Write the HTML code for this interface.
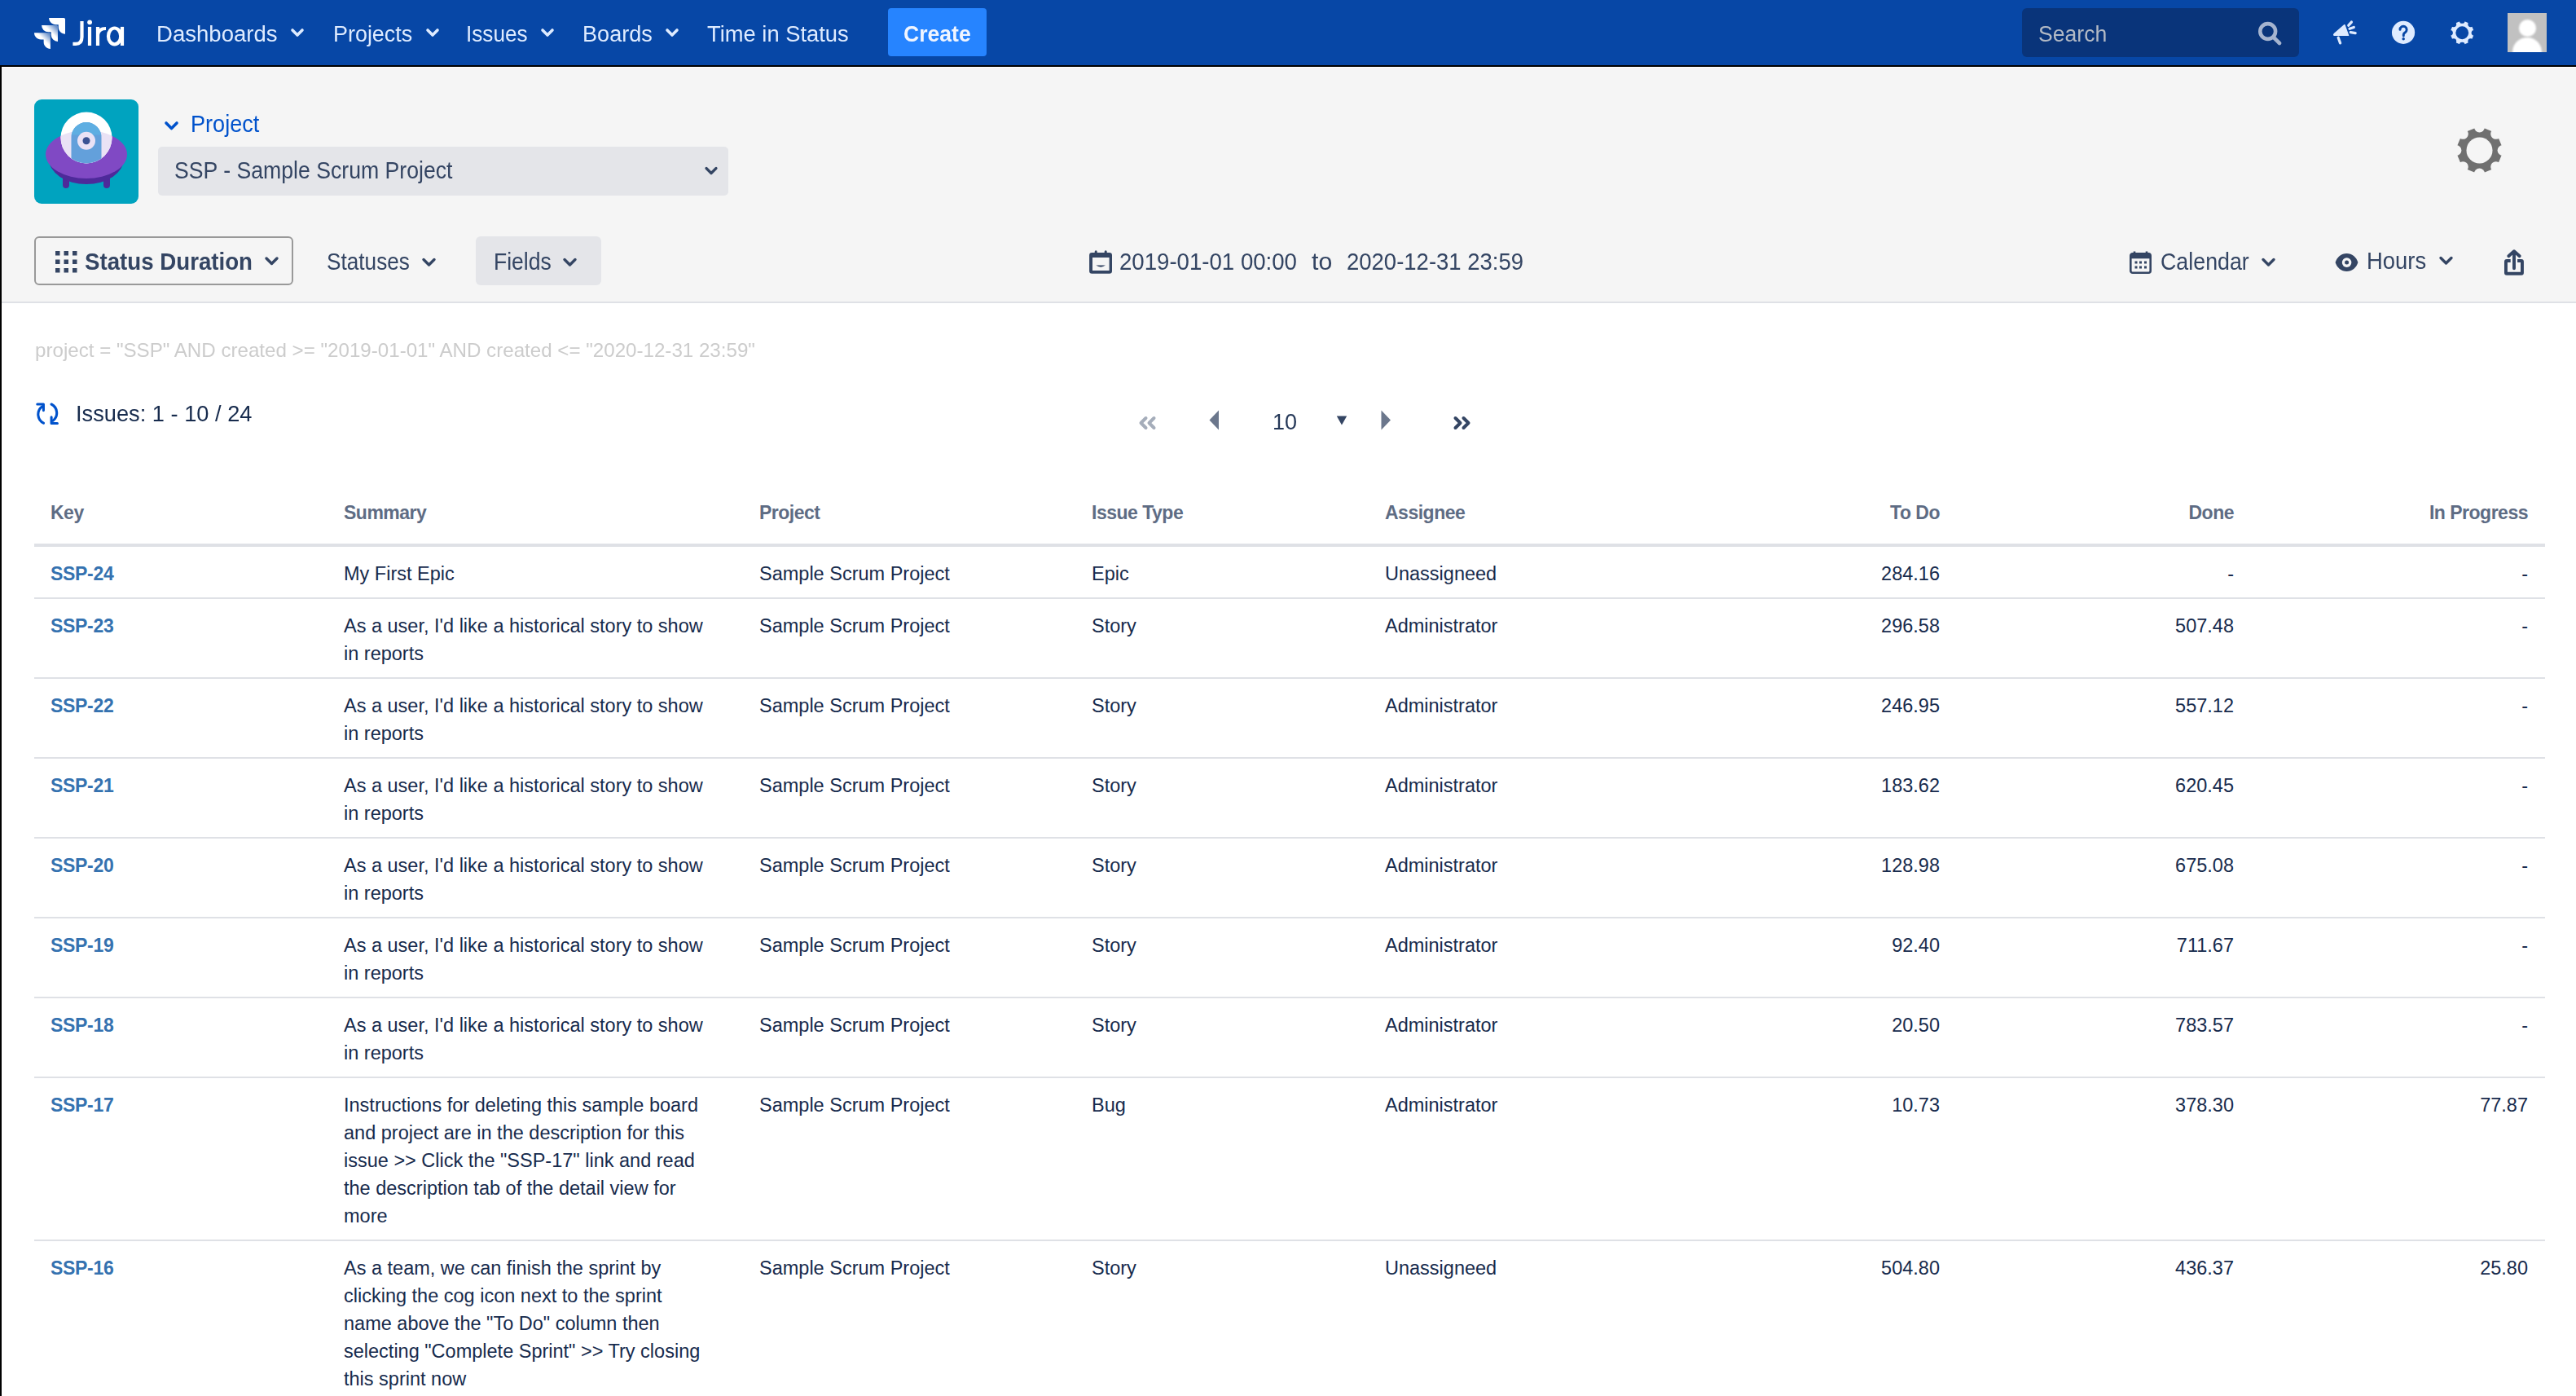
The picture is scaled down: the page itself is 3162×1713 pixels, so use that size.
<!DOCTYPE html>
<html><head><meta charset="utf-8">
<style>
html,body{margin:0;padding:0}
body{width:3162px;height:1713px;position:relative;overflow:hidden;background:#fff;font-family:"Liberation Sans",sans-serif;color:#172B4D}
.a{position:absolute;white-space:nowrap;line-height:1}
svg{position:absolute;overflow:visible}
#nav{position:absolute;left:0;top:0;width:3162px;height:80px;background:#0747A6}
.nv{color:#DEEBFF;font-size:27px}
#frameTop{position:absolute;left:0;top:80px;width:3162px;height:2px;background:#000}
#frameLeft{position:absolute;left:0;top:80px;width:2px;height:1633px;background:#000}
#hdr{position:absolute;left:2px;top:82px;width:3160px;height:288px;background:#F5F5F5;border-top:1px solid #fff}
#hdrB{position:absolute;left:2px;top:370px;width:3160px;height:2px;background:#DFE1E6}
.tb{color:#344563;font-size:26.7px}
.th{color:#5E6C84;font-size:23px;font-weight:700;letter-spacing:-0.5px}
.td{color:#172B4D;font-size:23.5px;line-height:34px}
.key{color:#3572B0;font-size:23px;font-weight:700;letter-spacing:-0.3px}
.r{text-align:right}
.hl{position:absolute;left:42px;width:3082px;background:#DFE1E6}
</style></head><body>
<div id="nav">
<svg style="left:42px;top:22px" width="38" height="38" viewBox="2 2 20 20">
<defs>
<linearGradient id="g1" x1="98%" y1="2%" x2="58%" y2="42%"><stop offset="0.18" stop-color="#fff" stop-opacity="0.4"/><stop offset="1" stop-color="#fff"/></linearGradient>
<linearGradient id="g2" x1="98%" y1="2%" x2="58%" y2="42%"><stop offset="0.18" stop-color="#fff" stop-opacity="0.4"/><stop offset="1" stop-color="#fff"/></linearGradient>
</defs>
<path fill="#fff" d="M11.53 2c0 2.4 1.97 4.35 4.35 4.35h1.78v1.7c0 2.4 1.94 4.34 4.34 4.35V2.84a.84.84 0 0 0-.84-.84h-9.63z"/>
<path fill="url(#g1)" d="M6.77 6.8a4.36 4.36 0 0 0 4.34 4.34h1.8v1.72a4.36 4.36 0 0 0 4.34 4.34V7.63a.84.84 0 0 0-.83-.83H6.77z"/>
<path fill="url(#g2)" d="M2 11.6c0 2.4 1.95 4.34 4.35 4.34h1.78v1.72c.01 2.39 1.95 4.34 4.34 4.34v-9.57a.84.84 0 0 0-.84-.84H2z"/>
</svg>
<svg style="left:0;top:0" width="160" height="70" viewBox="0 0 160 70"><g fill="none" stroke="#fff" stroke-width="4.2"><path d="M100.5 25.9V45.5Q100.5 53.9 93 53.9H89.4"/><path d="M110 32.9V56"/><path d="M120 32.9V56M120 42.5Q121 35 130 35"/><ellipse cx="140.6" cy="44.4" rx="7.6" ry="9.9"/><path d="M150 32.9V56"/></g><circle cx="110.1" cy="27.3" r="2.9" fill="#fff"/></svg>
<svg style="left:357px;top:35px" width="16" height="10" viewBox="0 0 16 10"><path d="M2 2l6 6 6-6" fill="none" stroke="#DEEBFF" stroke-width="3.6" stroke-linecap="round" stroke-linejoin="round"/></svg>
<svg style="left:523px;top:35px" width="16" height="10" viewBox="0 0 16 10"><path d="M2 2l6 6 6-6" fill="none" stroke="#DEEBFF" stroke-width="3.6" stroke-linecap="round" stroke-linejoin="round"/></svg>
<svg style="left:664px;top:35px" width="16" height="10" viewBox="0 0 16 10"><path d="M2 2l6 6 6-6" fill="none" stroke="#DEEBFF" stroke-width="3.6" stroke-linecap="round" stroke-linejoin="round"/></svg>
<svg style="left:817px;top:35px" width="16" height="10" viewBox="0 0 16 10"><path d="M2 2l6 6 6-6" fill="none" stroke="#DEEBFF" stroke-width="3.6" stroke-linecap="round" stroke-linejoin="round"/></svg>
<div style="position:absolute;left:1090px;top:10px;width:121px;height:59px;background:#2684FF;border-radius:4px"></div>
<div style="position:absolute;left:2482px;top:10px;width:340px;height:60px;background:#09347A;border-radius:6px"></div>
<svg style="left:2772px;top:27px" width="30" height="30" viewBox="0 0 30 30"><circle cx="11.7" cy="11.5" r="9.4" fill="none" stroke="#A5B4CF" stroke-width="4.6"/><path d="M19.5 19.5l6.5 6.5" stroke="#A5B4CF" stroke-width="4.6" stroke-linecap="round"/></svg>
<svg style="left:2858px;top:22px" width="40" height="36" viewBox="0 0 40 36"><path d="M19.9 8.6L7.2 19.6Q6 21 7.6 21.4L24.6 21.4z" fill="#DEEBFF" stroke="#DEEBFF" stroke-width="1.4" stroke-linejoin="round"/><path d="M12.2 24.3l2.4 6.6M24.8 9.2l3.6-4.1M26.1 13.3l5.2-1.8M27.3 17.6l5.8 1" stroke="#DEEBFF" stroke-width="3.3" stroke-linecap="round"/></svg>
<svg style="left:2936px;top:26px" width="29" height="29" viewBox="0 0 29 29"><circle cx="14.05" cy="13.85" r="14.1" fill="#DEEBFF"/><path d="M10 10.4A4.1 4.1 0 1 1 16.2 13.9Q14.3 14.9 14.3 16.5V18" fill="none" stroke="#0747A6" stroke-width="2.9" stroke-linecap="round"/><circle cx="14.2" cy="21.7" r="1.75" fill="#0747A6"/></svg>
<svg style="left:3008px;top:26px" width="28.5" height="28.5" viewBox="0 0 28.5 28.5"><defs><mask id="gm2"><rect x="-3" y="-3" width="34.5" height="34.5" fill="#fff"/><circle cx="14.25" cy="-0.52" r="3.3563636363636364" fill="#000"/><circle cx="24.69" cy="3.81" r="3.3563636363636364" fill="#000"/><circle cx="29.02" cy="14.25" r="3.3563636363636364" fill="#000"/><circle cx="24.69" cy="24.69" r="3.3563636363636364" fill="#000"/><circle cx="14.25" cy="29.02" r="3.3563636363636364" fill="#000"/><circle cx="3.81" cy="24.69" r="3.3563636363636364" fill="#000"/><circle cx="-0.52" cy="14.25" r="3.3563636363636364" fill="#000"/><circle cx="3.81" cy="3.81" r="3.3563636363636364" fill="#000"/><circle cx="14.25" cy="14.25" r="7.9" fill="#000"/></mask></defs><polygon points="14.25,-1.03 25.06,3.44 29.53,14.25 25.06,25.06 14.25,29.53 3.44,25.06 -1.03,14.25 3.44,3.44" fill="#DEEBFF" mask="url(#gm2)"/></svg>
<div style="position:absolute;left:3078px;top:16px;width:48px;height:48px;background:#C1C1C1;overflow:hidden">
<div style="position:absolute;left:13.5px;top:8px;width:21px;height:20.5px;border-radius:50%;background:#fff;filter:blur(0.9px)"></div>
<div style="position:absolute;left:6.2px;top:29.5px;width:35.7px;height:36px;border-radius:50% 50% 0 0;background:#fff;filter:blur(0.9px)"></div>
</div>
</div>
<div id="frameTop"></div>
<div id="hdr"></div>
<div id="hdrB"></div>
<svg style="left:42px;top:122px" width="128" height="128" viewBox="0 0 128 128">
<defs><clipPath id="dome"><circle cx="64" cy="47" r="31.5"/></clipPath></defs>
<rect width="128" height="128" rx="9" fill="#00A3BF"/>
<path d="M35 95v10a4 4 0 0 0 8 0V95zM85 95v10a4 4 0 0 0 8 0V95z" fill="#4D2A9A"/>
<ellipse cx="64" cy="73" rx="46" ry="31" fill="#4D2A9A"/>
<ellipse cx="64" cy="67.5" rx="50" ry="29.5" fill="#8049C4"/>
<circle cx="64" cy="47" r="31.5" fill="#fff"/>
<ellipse cx="64" cy="67.5" rx="50" ry="29.5" fill="#EAE2F5" clip-path="url(#dome)"/>
<path d="M45.5 84V46.5a18.5 18.5 0 0 1 37 0V84z" fill="#63A0DB" clip-path="url(#dome)"/>
<path d="M45.5 46.5a18.5 18.5 0 0 1 37 0v-3H45.5z" fill="#5EAEE2"/>
<circle cx="64" cy="50.7" r="11" fill="#EAE2F5"/>
<circle cx="64" cy="50.7" r="4.5" fill="#3B5394"/>
</svg>
<svg style="left:202px;top:149px" width="17" height="11" viewBox="0 0 17 11"><path d="M2 2l6.5 6.5L15 2" fill="none" stroke="#0052CC" stroke-width="3.6" stroke-linecap="round" stroke-linejoin="round"/></svg>
<div style="position:absolute;left:194px;top:180px;width:700px;height:60px;background:#E4E5E9;border-radius:5px"></div>
<svg style="left:865px;top:204px" width="16" height="11" viewBox="0 0 16 11"><path d="M2 2.5l6 6 6-6" fill="none" stroke="#344563" stroke-width="3.2" stroke-linecap="round" stroke-linejoin="round"/></svg>
<svg style="left:3016px;top:157px" width="55" height="55" viewBox="0 0 55 55"><defs><mask id="gm1"><rect x="-3" y="-3" width="61" height="61" fill="#fff"/><circle cx="27.50" cy="-1.10" r="6.5" fill="#000"/><circle cx="47.72" cy="7.28" r="6.5" fill="#000"/><circle cx="56.10" cy="27.50" r="6.5" fill="#000"/><circle cx="47.72" cy="47.72" r="6.5" fill="#000"/><circle cx="27.50" cy="56.10" r="6.5" fill="#000"/><circle cx="7.28" cy="47.72" r="6.5" fill="#000"/><circle cx="-1.10" cy="27.50" r="6.5" fill="#000"/><circle cx="7.28" cy="7.28" r="6.5" fill="#000"/><circle cx="27.5" cy="27.5" r="16" fill="#000"/></mask></defs><polygon points="27.50,-2.10 48.43,6.57 57.10,27.50 48.43,48.43 27.50,57.10 6.57,48.43 -2.10,27.50 6.57,6.57" fill="#707070" mask="url(#gm1)"/></svg>
<div style="position:absolute;left:42px;top:290px;width:314px;height:56px;border:2px solid #999;border-radius:6px"></div>
<svg style="left:68px;top:308px" width="27" height="27" viewBox="0 0 27 27" fill="#344563"><rect x="0" y="0" width="5.5" height="5.5"/><rect x="10.5" y="0" width="5.5" height="5.5"/><rect x="21" y="0" width="5.5" height="5.5"/><rect x="0" y="10.5" width="5.5" height="5.5"/><rect x="10.5" y="10.5" width="5.5" height="5.5"/><rect x="21" y="10.5" width="5.5" height="5.5"/><rect x="0" y="21" width="5.5" height="5.5"/><rect x="10.5" y="21" width="5.5" height="5.5"/><rect x="21" y="21" width="5.5" height="5.5"/></svg>
<svg style="left:325px;top:315px" width="17" height="11" viewBox="0 0 17 11"><path d="M2 2l6.5 6.5L15 2" fill="none" stroke="#344563" stroke-width="3.4" stroke-linecap="round" stroke-linejoin="round"/></svg>
<svg style="left:518px;top:316px" width="17" height="12" viewBox="0 0 17 12"><path d="M2 2.5l6.5 6.5L15 2.5" fill="none" stroke="#344563" stroke-width="3.4" stroke-linecap="round" stroke-linejoin="round"/></svg>
<div style="position:absolute;left:584px;top:290px;width:154px;height:59.5px;background:#E4E5E9;border-radius:6px"></div>
<svg style="left:691px;top:316px" width="17" height="12" viewBox="0 0 17 12"><path d="M2 2.5l6.5 6.5L15 2.5" fill="none" stroke="#344563" stroke-width="3.4" stroke-linecap="round" stroke-linejoin="round"/></svg>
<svg style="left:1330px;top:300px" width="42" height="42" viewBox="0 0 42 42"><path fill="#344563" fill-rule="evenodd" d="M10.3 10H31.8A3.2 3.2 0 0 1 35 13.2V32.6A3.2 3.2 0 0 1 31.8 35.8H10.3A3.2 3.2 0 0 1 7.1 32.6V13.2A3.2 3.2 0 0 1 10.3 10zM11 16V31.9H31.6V16z"/><path d="M15.2 8.8v2M27.2 8.8v2" stroke="#344563" stroke-width="3" stroke-linecap="round"/><path d="M15.3 25.6H27Q21.2 29.8 15.3 25.6z" fill="#344563"/></svg>
<svg style="left:2614px;top:308px" width="28" height="28" viewBox="0 0 28 28"><path d="M6 0.5v4M21 0.5v4" stroke="#344563" stroke-width="2.6"/><rect x="1.3" y="3.3" width="24.4" height="23.4" rx="2.5" fill="none" stroke="#344563" stroke-width="2.6"/><rect x="1.3" y="3.3" width="24.4" height="6" fill="#344563"/><g fill="#344563"><rect x="6.5" y="12.5" width="3" height="3"/><rect x="12" y="12.5" width="3" height="3"/><rect x="18" y="12.5" width="3" height="3"/><rect x="6.5" y="18.5" width="3" height="3"/><rect x="12" y="18.5" width="3" height="3"/><rect x="18" y="18.5" width="3" height="3"/></g></svg>
<svg style="left:2776px;top:316px" width="17" height="12" viewBox="0 0 17 12"><path d="M2 2.5l6.5 6.5L15 2.5" fill="none" stroke="#344563" stroke-width="3.4" stroke-linecap="round" stroke-linejoin="round"/></svg>
<svg style="left:2860px;top:302px" width="40" height="40" viewBox="0 0 40 40"><path d="M6.6 20C8.5 13.5 14 8.9 20.5 8.9S32.5 13.5 34.4 20C32.5 26.5 27 31 20.5 31S8.5 26.5 6.6 20z" fill="#344563"/><circle cx="20.6" cy="20.1" r="5.8" fill="#F5F5F5"/><circle cx="20.6" cy="20.1" r="2.5" fill="#344563"/></svg>
<svg style="left:2994px;top:314px" width="17" height="12" viewBox="0 0 17 12"><path d="M2 2.5l6.5 6.5L15 2.5" fill="none" stroke="#344563" stroke-width="3.4" stroke-linecap="round" stroke-linejoin="round"/></svg>
<svg style="left:3065px;top:300px" width="40" height="42" viewBox="0 0 40 42"><path fill="#344563" d="M12 18H16.7V21.9H12.9V33.8H29V21.9H25.1V18H29.9A3 3 0 0 1 32.9 21V34.7A3 3 0 0 1 29.9 37.7H12A3 3 0 0 1 9 34.7V21A3 3 0 0 1 12 18z"/><path d="M21 9V29.3M14.3 14.2L21 8.2l6.7 6" fill="none" stroke="#344563" stroke-width="3.9" stroke-linecap="round" stroke-linejoin="round"/></svg>
<svg style="left:36px;top:485px" width="45" height="45" viewBox="0 0 45 45"><path d="M17.4 34.2A12 12 0 0 1 15.5 14" fill="none" stroke="#0052CC" stroke-width="3.1" stroke-linecap="round"/><path d="M9.8 11H17.4V18.6" fill="none" stroke="#0052CC" stroke-width="3.1" stroke-linecap="round" stroke-linejoin="round"/><path d="M27.1 11A12 12 0 0 1 29 31.2" fill="none" stroke="#0052CC" stroke-width="3.1" stroke-linecap="round"/><path d="M27.1 26.9V34.5H34.4" fill="none" stroke="#0052CC" stroke-width="3.1" stroke-linecap="round" stroke-linejoin="round"/></svg>
<svg style="left:1396px;top:509px" width="26" height="20" viewBox="0 0 26 20"><path d="M10.5 4L4.5 10l6 6M20.5 4L14.5 10l6 6" fill="none" stroke="#A5ADBA" stroke-width="4" stroke-linecap="round" stroke-linejoin="round"/></svg>
<svg style="left:1484px;top:503px" width="13" height="25" viewBox="0 0 13 25"><path d="M12 0.5V24.5L0.5 12.5z" fill="#6B778C"/></svg>
<svg style="left:1640px;top:510px" width="14" height="12" viewBox="0 0 14 12"><path d="M0.8 0.5H13.2L7 11.5z" fill="#344563"/></svg>
<svg style="left:1695px;top:503px" width="13" height="25" viewBox="0 0 13 25"><path d="M0.5 0.5V24.5L12 12.5z" fill="#6B778C"/></svg>
<svg style="left:1782px;top:509px" width="26" height="20" viewBox="0 0 26 20"><path d="M4.5 4L10.5 10l-6 6M14.5 4L20.5 10l-6 6" fill="none" stroke="#344563" stroke-width="4" stroke-linecap="round" stroke-linejoin="round"/></svg>

<div class="a" style="left:192.1px;top:26.8px;font-size:28.4px;font-weight:400;color:#DEEBFF;transform:scaleX(0.9707);transform-origin:0 0">Dashboards</div>
<div class="a" style="left:408.8px;top:26.8px;font-size:28.4px;font-weight:400;color:#DEEBFF;transform:scaleX(0.9480);transform-origin:0 0">Projects</div>
<div class="a" style="left:572.2px;top:26.8px;font-size:28.4px;font-weight:400;color:#DEEBFF;transform:scaleX(0.9205);transform-origin:0 0">Issues</div>
<div class="a" style="left:714.7px;top:26.8px;font-size:28.4px;font-weight:400;color:#DEEBFF;transform:scaleX(0.9540);transform-origin:0 0">Boards</div>
<div class="a" style="left:867.5px;top:26.8px;font-size:28.4px;font-weight:400;color:#DEEBFF;transform:scaleX(0.9626);transform-origin:0 0">Time in Status</div>
<div class="a" style="left:1108.7px;top:26.9px;font-size:28.4px;font-weight:700;color:#F0F5FF;transform:scaleX(0.9356);transform-origin:0 0">Create</div>
<div class="a" style="left:2501.6px;top:27.1px;font-size:28.4px;font-weight:400;color:#B3BAC5;transform:scaleX(0.9368);transform-origin:0 0">Search</div>
<div class="a" style="left:234.2px;top:138.4px;font-size:28.8px;font-weight:400;color:#0052CC;transform:scaleX(0.9409);transform-origin:0 0">Project</div>
<div class="a" style="left:213.7px;top:195.0px;font-size:28.8px;font-weight:400;color:#344563;transform:scaleX(0.9250);transform-origin:0 0">SSP - Sample Scrum Project</div>
<div class="a" style="left:103.6px;top:306.6px;font-size:28.8px;font-weight:700;color:#344563;transform:scaleX(0.9608);transform-origin:0 0">Status Duration</div>
<div class="a" style="left:401.1px;top:306.6px;font-size:28.8px;font-weight:400;color:#344563;transform:scaleX(0.9091);transform-origin:0 0">Statuses</div>
<div class="a" style="left:606.0px;top:306.6px;font-size:28.8px;font-weight:400;color:#344563;transform:scaleX(0.9216);transform-origin:0 0">Fields</div>
<div class="a" style="left:1374.0px;top:306.6px;font-size:28.8px;font-weight:400;color:#344563;transform:scaleX(0.9587);transform-origin:0 0">2019-01-01 00:00</div>
<div class="a" style="left:1609.8px;top:306.6px;font-size:28.8px;font-weight:400;color:#344563;transform:scaleX(1.0522);transform-origin:0 0">to</div>
<div class="a" style="left:1652.6px;top:306.6px;font-size:28.8px;font-weight:400;color:#344563;transform:scaleX(0.9547);transform-origin:0 0">2020-12-31 23:59</div>
<div class="a" style="left:2651.6px;top:306.5px;font-size:28.8px;font-weight:400;color:#344563;transform:scaleX(0.9310);transform-origin:0 0">Calendar</div>
<div class="a" style="left:2904.6px;top:306.4px;font-size:28.8px;font-weight:400;color:#344563;transform:scaleX(0.9527);transform-origin:0 0">Hours</div>
<div class="a" style="left:42.7px;top:418.4px;font-size:24px;font-weight:400;color:#CCCCCC;transform:scaleX(1.0056);transform-origin:0 0">project = &quot;SSP&quot; AND created &gt;= &quot;2019-01-01&quot; AND created &lt;= &quot;2020-12-31 23:59&quot;</div>
<div class="a" style="left:93.1px;top:493.8px;font-size:28px;font-weight:400;color:#172B4D;transform:scaleX(0.9727);transform-origin:0 0">Issues: 1 - 10 / 24</div>
<div class="a" style="left:1562.1px;top:504.3px;font-size:28px;font-weight:400;color:#253858;transform:scaleX(0.9643);transform-origin:0 0">10</div>
<div class="a th" style="left:62px;top:617.9px">Key</div>
<div class="a th" style="left:422px;top:617.9px">Summary</div>
<div class="a th" style="left:932px;top:617.9px">Project</div>
<div class="a th" style="left:1340px;top:617.9px">Issue Type</div>
<div class="a th" style="left:1700px;top:617.9px">Assignee</div>
<div class="a th" style="right:781px;top:617.9px">To Do</div>
<div class="a th" style="right:420px;top:617.9px">Done</div>
<div class="a th" style="right:59px;top:617.9px">In Progress</div>
<div class="hl" style="top:667px;height:4px"></div>
<div class="a td key" style="left:62px;top:687px">SSP-24</div>
<div class="a td" style="left:422px;top:687px">My First Epic</div>
<div class="a td" style="left:932px;top:687px">Sample Scrum Project</div>
<div class="a td" style="left:1340px;top:687px">Epic</div>
<div class="a td" style="left:1700px;top:687px">Unassigneed</div>
<div class="a td" style="right:781px;top:687px">284.16</div>
<div class="a td" style="right:420px;top:687px">-</div>
<div class="a td" style="right:59px;top:687px">-</div>
<div class="hl" style="top:733px;height:2px"></div>
<div class="a td key" style="left:62px;top:751px">SSP-23</div>
<div class="a td" style="left:422px;top:751px">As a user, I&#x27;d like a historical story to show<br>in reports</div>
<div class="a td" style="left:932px;top:751px">Sample Scrum Project</div>
<div class="a td" style="left:1340px;top:751px">Story</div>
<div class="a td" style="left:1700px;top:751px">Administrator</div>
<div class="a td" style="right:781px;top:751px">296.58</div>
<div class="a td" style="right:420px;top:751px">507.48</div>
<div class="a td" style="right:59px;top:751px">-</div>
<div class="hl" style="top:831px;height:2px"></div>
<div class="a td key" style="left:62px;top:849px">SSP-22</div>
<div class="a td" style="left:422px;top:849px">As a user, I&#x27;d like a historical story to show<br>in reports</div>
<div class="a td" style="left:932px;top:849px">Sample Scrum Project</div>
<div class="a td" style="left:1340px;top:849px">Story</div>
<div class="a td" style="left:1700px;top:849px">Administrator</div>
<div class="a td" style="right:781px;top:849px">246.95</div>
<div class="a td" style="right:420px;top:849px">557.12</div>
<div class="a td" style="right:59px;top:849px">-</div>
<div class="hl" style="top:929px;height:2px"></div>
<div class="a td key" style="left:62px;top:947px">SSP-21</div>
<div class="a td" style="left:422px;top:947px">As a user, I&#x27;d like a historical story to show<br>in reports</div>
<div class="a td" style="left:932px;top:947px">Sample Scrum Project</div>
<div class="a td" style="left:1340px;top:947px">Story</div>
<div class="a td" style="left:1700px;top:947px">Administrator</div>
<div class="a td" style="right:781px;top:947px">183.62</div>
<div class="a td" style="right:420px;top:947px">620.45</div>
<div class="a td" style="right:59px;top:947px">-</div>
<div class="hl" style="top:1027px;height:2px"></div>
<div class="a td key" style="left:62px;top:1045px">SSP-20</div>
<div class="a td" style="left:422px;top:1045px">As a user, I&#x27;d like a historical story to show<br>in reports</div>
<div class="a td" style="left:932px;top:1045px">Sample Scrum Project</div>
<div class="a td" style="left:1340px;top:1045px">Story</div>
<div class="a td" style="left:1700px;top:1045px">Administrator</div>
<div class="a td" style="right:781px;top:1045px">128.98</div>
<div class="a td" style="right:420px;top:1045px">675.08</div>
<div class="a td" style="right:59px;top:1045px">-</div>
<div class="hl" style="top:1125px;height:2px"></div>
<div class="a td key" style="left:62px;top:1143px">SSP-19</div>
<div class="a td" style="left:422px;top:1143px">As a user, I&#x27;d like a historical story to show<br>in reports</div>
<div class="a td" style="left:932px;top:1143px">Sample Scrum Project</div>
<div class="a td" style="left:1340px;top:1143px">Story</div>
<div class="a td" style="left:1700px;top:1143px">Administrator</div>
<div class="a td" style="right:781px;top:1143px">92.40</div>
<div class="a td" style="right:420px;top:1143px">711.67</div>
<div class="a td" style="right:59px;top:1143px">-</div>
<div class="hl" style="top:1223px;height:2px"></div>
<div class="a td key" style="left:62px;top:1241px">SSP-18</div>
<div class="a td" style="left:422px;top:1241px">As a user, I&#x27;d like a historical story to show<br>in reports</div>
<div class="a td" style="left:932px;top:1241px">Sample Scrum Project</div>
<div class="a td" style="left:1340px;top:1241px">Story</div>
<div class="a td" style="left:1700px;top:1241px">Administrator</div>
<div class="a td" style="right:781px;top:1241px">20.50</div>
<div class="a td" style="right:420px;top:1241px">783.57</div>
<div class="a td" style="right:59px;top:1241px">-</div>
<div class="hl" style="top:1321px;height:2px"></div>
<div class="a td key" style="left:62px;top:1339px">SSP-17</div>
<div class="a td" style="left:422px;top:1339px">Instructions for deleting this sample board<br>and project are in the description for this<br>issue &gt;&gt; Click the &quot;SSP-17&quot; link and read<br>the description tab of the detail view for<br>more</div>
<div class="a td" style="left:932px;top:1339px">Sample Scrum Project</div>
<div class="a td" style="left:1340px;top:1339px">Bug</div>
<div class="a td" style="left:1700px;top:1339px">Administrator</div>
<div class="a td" style="right:781px;top:1339px">10.73</div>
<div class="a td" style="right:420px;top:1339px">378.30</div>
<div class="a td" style="right:59px;top:1339px">77.87</div>
<div class="hl" style="top:1521px;height:2px"></div>
<div class="a td key" style="left:62px;top:1539px">SSP-16</div>
<div class="a td" style="left:422px;top:1539px">As a team, we can finish the sprint by<br>clicking the cog icon next to the sprint<br>name above the &quot;To Do&quot; column then<br>selecting &quot;Complete Sprint&quot; &gt;&gt; Try closing<br>this sprint now</div>
<div class="a td" style="left:932px;top:1539px">Sample Scrum Project</div>
<div class="a td" style="left:1340px;top:1539px">Story</div>
<div class="a td" style="left:1700px;top:1539px">Unassigneed</div>
<div class="a td" style="right:781px;top:1539px">504.80</div>
<div class="a td" style="right:420px;top:1539px">436.37</div>
<div class="a td" style="right:59px;top:1539px">25.80</div>

<div id="frameLeft"></div>
</body></html>
